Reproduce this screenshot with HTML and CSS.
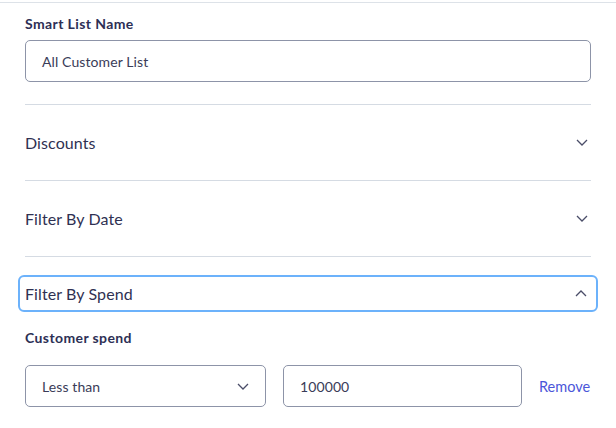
FILE: index.html
```html
<!DOCTYPE html>
<html>
<head>
<meta charset="utf-8">
<link rel="stylesheet" href="styles.css">
</head>
<body>
<div class="panel">
  <div class="field">
    <label class="label first">Smart List Name</label>
    <div class="input">All Customer List</div>
  </div>
  <div class="acc">
    <div class="acc-head">
      <span>Discounts</span>
      <svg class="chev" width="12" height="7" viewBox="0 0 12 7"><path d="M1 1l5 5 5-5" fill="none" stroke="#4a4d68" stroke-width="1.3"/></svg>
    </div>
  </div>
  <div class="acc">
    <div class="acc-head">
      <span>Filter By Date</span>
      <svg class="chev" width="12" height="7" viewBox="0 0 12 7"><path d="M1 1l5 5 5-5" fill="none" stroke="#4a4d68" stroke-width="1.3"/></svg>
    </div>
  </div>
  <div class="acc open">
    <div class="acc-head focus">
      <span>Filter By Spend</span>
      <svg class="chev" width="12" height="7" viewBox="0 0 12 7"><path d="M1 6l5-5 5 5" fill="none" stroke="#4a4d68" stroke-width="1.3"/></svg>
    </div>
    <div class="acc-body">
      <label class="label">Customer spend</label>
      <div class="row">
        <div class="input select">
          <span>Less than</span>
          <svg width="12" height="7" viewBox="0 0 12 7"><path d="M1 1l5 5 5-5" fill="none" stroke="#4a4d68" stroke-width="1.3"/></svg>
        </div>
        <div class="input num">100000</div>
        <a class="remove">Remove</a>
      </div>
    </div>
  </div>
</div>
</body>
</html>
```
FILE: styles.css
```css
* { box-sizing: border-box; }
html, body { margin: 0; padding: 0; background: #fff; }
body {
  font-family: Lato, "Open Sans", sans-serif;
  color: #2f3152;
  width: 616px;
}
.panel {
  margin-top: 2px;
  border-top: 1px solid #dde2e8;
  padding: 0 25px;
}
.field {
  padding-top: 12px;
  padding-bottom: 22px;
  border-bottom: 1px solid #d5dbe3;
}
.label {
  display: block;
  font-weight: 700;
  font-size: 14px;
  letter-spacing: 0.4px;
  line-height: 18px;
  color: #2d2f55;
  margin-bottom: 4px;
}
.label.first {
  margin-bottom: 7px;
}
.input {
  height: 42px;
  border: 1px solid #8d94a8;
  border-radius: 5px;
  padding: 0 16px;
  display: flex;
  align-items: center;
  font-size: 14px;
  letter-spacing: 0.1px;
  color: #3a3c58;
}
.acc {
  border-bottom: 1px solid #d5dbe3;
}
.acc-head {
  height: 75px;
  display: flex;
  align-items: center;
  justify-content: space-between;
  font-size: 16px;
  letter-spacing: 0.1px;
  color: #2f3152;
  padding-right: 3px;
}
.acc.open {
  border-bottom: none;
  padding-top: 18px;
}
.acc-head.focus {
  height: 37px;
  margin: 0 -7px;
  padding: 0 9px 0 5px;
  border: 2px solid #6cb2fb;
  border-radius: 6px;
}
.acc-body {
  padding-top: 17px;
}
.row {
  display: flex;
  align-items: center;
  gap: 17px;
  margin-top: 18px;
}
.select {
  width: 241px;
  justify-content: space-between;
  padding-right: 16px;
}
.num {
  width: 239px;
}
.remove {
  font-size: 14.5px;
  color: #4b56d9;
  cursor: pointer;
}
```
